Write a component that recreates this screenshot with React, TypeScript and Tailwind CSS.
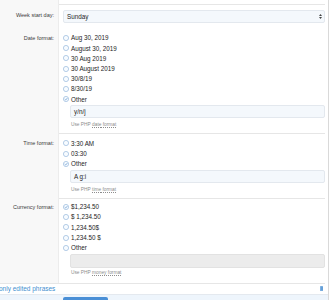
import React from 'react';

type Opt = { label: string; checked?: boolean };

const Radio = ({ checked }: { checked?: boolean }) => (
    <svg width="6" height="6" viewBox="0 0 12 12" className="shrink-0">
        <circle cx="6" cy="6" r="5.2" fill="#f7fbff" stroke="#8fb3da" strokeWidth="1.3" />
        {checked && (
            <path d="M3.4 6.2 L5.3 8 L8.7 4.2" fill="none" stroke="#5f93cc" strokeWidth="1.4" />
        )}
    </svg>
);

const OptionList = ({ options }: { options: Opt[] }) => (
    <div>
        {options.map((o) => (
            <div key={o.label} className="flex items-center h-[10.2px] gap-[2px]">
                <Radio checked={o.checked} />
                <span className="text-[#1d1d1d] text-[6.3px]">{o.label}</span>
            </div>
        ))}
    </div>
);

const TextBox = ({ value }: { value?: string }) => (
    <div className="ml-[7px] h-[13px] border rounded-[2px] flex items-center pl-[3px] text-[6.3px] text-[#1d1d1d] bg-[#f4f8fc] border-[#e3e8ee]">
        {value}
    </div>
);

const Hint = ({ word }: { word: string }) => (
    <div className="ml-[8px] h-[10px] flex items-center text-[4.8px] text-[#8d8d8d]">
        Use PHP&nbsp;<span className="underline decoration-dotted">{word} format</span>
    </div>
);

const Row = ({
    label,
    children,
    sep = true,
    labelTop,
    className = '',
}: {
    label?: string;
    children: React.ReactNode;
    sep?: boolean;
    labelTop: number;
    className?: string;
}) => (
    <div className="flex">
        <div className="w-[59px] shrink-0 bg-[#f8f8f8] border-r border-[#ececec] text-right pr-[4px] text-[#3c3c3c] text-[5.5px]">
            {label && (
                <>
                    <div style={{ height: labelTop }} />
                    <div className="h-[10px] leading-[10px]">{label}</div>
                </>
            )}
        </div>
        <div className="flex-1 pr-[3px]">
            {sep && <div className="h-px bg-[#e6e6e6]" />}
            <div className={`pl-[4px] ${className}`}>{children}</div>
        </div>
    </div>
);

export default function App() {
    return (
        <div
            className="w-[329px] h-[300px] overflow-hidden bg-white"
            style={{ fontFamily: '"Liberation Sans", Arial, sans-serif' }}
        >
            <div className="w-[329px] border-r border-[#d9d9d9]">
                {/* previous row stub */}
                <Row sep={false} labelTop={0} className="h-[4px]">
                    <div />
                </Row>

                <Row label="Week start day:" labelTop={6} className="pt-[5px] pb-[10px]">
                    <div className="h-[13px] border border-[#e3e8ee] rounded-[2px] bg-[#f4f8fc] flex items-center pl-[3px] pr-[2px] text-[6.3px] text-[#1d1d1d]">
                        <span className="flex-1">Sunday</span>
                        <svg width="3" height="5" viewBox="0 0 6 10">
                            <path d="M0 4 L3 0 L6 4 Z M0 6 L3 10 L6 6 Z" fill="#444" />
                        </svg>
                    </div>
                </Row>

                <Row sep={false} label="Date format:" labelTop={0} className="pb-[4px]">
                    <OptionList
                        options={[
                            { label: 'Aug 30, 2019' },
                            { label: 'August 30, 2019' },
                            { label: '30 Aug 2019' },
                            { label: '30 August 2019' },
                            { label: '30/8/19' },
                            { label: '8/30/19' },
                            { label: 'Other', checked: true },
                        ]}
                    />
                    <div className="mt-[1px]">
                        <TextBox value="y/n/j" />
                    </div>
                    <div className="mt-[1px]">
                        <Hint word="date" />
                    </div>
                </Row>

                <Row label="Time format:" labelTop={5} className="pt-[4px] pb-[3px]">
                    <OptionList
                        options={[{ label: '3:30 AM' }, { label: '03:30' }, { label: 'Other', checked: true }]}
                    />
                    <div className="mt-[1px]">
                        <TextBox value="A g:i" />
                    </div>
                    <div className="mt-[2px]">
                        <Hint word="time" />
                    </div>
                </Row>

                <Row label="Currency format:" labelTop={4} className="pt-[3px] pb-[5px]">
                    <OptionList
                        options={[
                            { label: '$1,234.50', checked: true },
                            { label: '$ 1,234.50' },
                            { label: '1,234.50$' },
                            { label: '1,234.50 $' },
                            { label: 'Other' },
                        ]}
                    />
                    <div className="mt-[1px]">
                        <div className="ml-[7px] h-[14px] border rounded-[2px] bg-[#ececec] border-[#e2e2e2]" />
                    </div>
                    <Hint word="money" />
                </Row>

                <div className="h-px bg-[#e6e6e6] mr-[3px]" />
                <div className="h-[11px] flex items-center pr-[5px] border-b border-[#e4e9ef] text-[6.5px]">
                    <span className="flex-1 text-[#3f8fd0] -ml-[1px]">only edited phrases</span>
                    <svg width="3" height="5" viewBox="0 0 6 10">
                        <rect x="0" y="0" width="6" height="10" rx="1" fill="#7fb0e0" />
                        <rect x="3" y="1.5" width="2" height="7" fill="#4d8fd0" />
                    </svg>
                </div>
                <div className="h-[10px] bg-[#eef5fc] pt-[2px] pl-[63px]">
                    <div className="w-[45px] h-[8px] bg-[#4a8fd6] rounded-[2px]" />
                </div>
            </div>
        </div>
    );
}
